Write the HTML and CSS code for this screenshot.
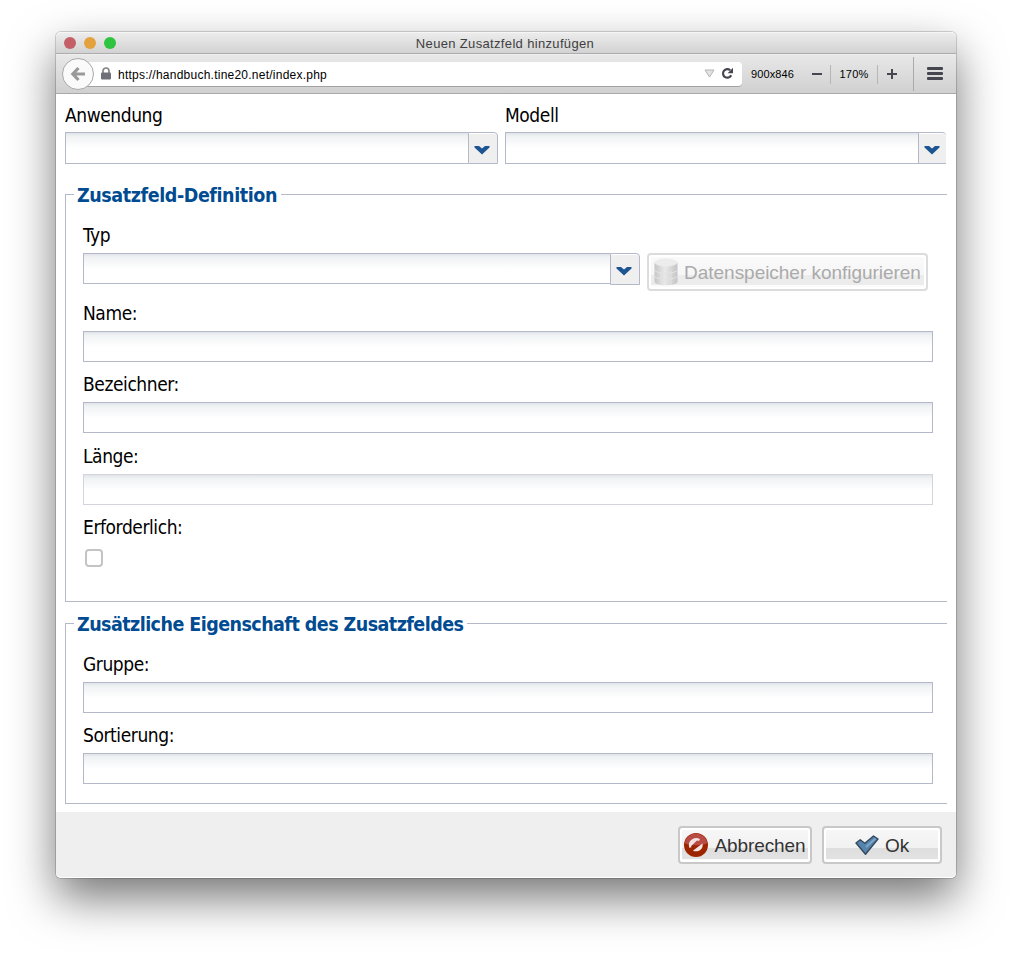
FILE: index.html
```html
<!DOCTYPE html>
<html lang="de">
<head>
<meta charset="utf-8">
<title>Neuen Zusatzfeld hinzufügen</title>
<link rel="stylesheet" href="styles.css">
</head>
<body>
<div class="window">
  <header class="titlebar">
    <div class="lights"><i class="light close"></i><i class="light minimize"></i><i class="light maximize"></i></div>
    <span class="title">Neuen Zusatzfeld hinzufügen</span>
  </header>
  <nav class="toolbar">
    <button class="back" aria-label="Zurück"><svg width="16" height="16" viewBox="0 0 16 16"><path d="M8.500 2 2.800 8l5.700 6M3 8h12" fill="none" stroke="#999" stroke-width="3.200"/></svg></button>
    <div class="url">
      <svg class="lock" width="10" height="13" viewBox="0 0 10 13"><path d="M2 6V4a3 3 0 0 1 6 0v2" fill="none" stroke="#858585" stroke-width="1.700"/><rect y="5.600" width="10" height="6.900" rx="1" fill="#70707a"/></svg>
      <span class="address">https://handbuch.tine20.net/index.php</span>
      <svg class="history" width="11" height="9" viewBox="0 0 11 9"><path d="M1 1h9L5.500 8z" fill="#e3e3e3" stroke="#b3b3b3"/></svg>
      <svg class="reload" width="13" height="13" viewBox="0 0 13 13"><path d="M10.200 8.200A4.300 4.300 0 1 1 9.200 3.200" fill="none" stroke="#464650" stroke-width="2.200"/><path d="M12 .8v5.400H6.600z" fill="#464650"/></svg>
    </div>
    <span class="size">900x846</span>
    <span class="minus"></span>
    <span class="zoom">170%</span>
    <span class="plus"></span>
    <span class="menu"><i></i><i></i><i></i></span>
  </nav>
  <main class="content">
    <div class="top-row">
      <div class="col-app">
        <label class="label">Anwendung</label>
        <div class="combo tall"><div class="input"></div><div class="trigger"><svg width="16" height="10" viewBox="0 0 16 10"><path d="M.5 1H5l3 2.500L11 1h4.500v1.500L8 9.500.5 2.500z" fill="#1d5592"/></svg></div></div>
      </div>
      <div class="col-model">
        <label class="label">Modell</label>
        <div class="combo tall cut"><div class="input"></div><div class="trigger"><svg width="16" height="10" viewBox="0 0 16 10"><path d="M.5 1H5l3 2.500L11 1h4.500v1.500L8 9.500.5 2.500z" fill="#1d5592"/></svg></div></div>
      </div>
    </div>
    <fieldset class="group definition">
      <legend>Zusatzfeld-Definition</legend>
      <div class="field">
        <label class="label">Typ</label>
        <div class="type-row">
          <div class="combo type"><div class="input"></div><div class="trigger"><svg width="16" height="10" viewBox="0 0 16 10"><path d="M.5 1H5l3 2.500L11 1h4.500v1.500L8 9.500.5 2.500z" fill="#1d5592"/></svg></div></div>
          <button class="btn store" disabled>
            <svg width="24" height="28" viewBox="0 0 24 28"><defs><linearGradient id="db"><stop offset="0" stop-color="#c6c6c6"/><stop offset=".45" stop-color="#e9e9e9"/><stop offset="1" stop-color="#c4c4c4"/></linearGradient></defs><path d="M.5 4.500v19c0 5 23 5 23 0v-19z" fill="url(#db)"/><ellipse cx="12" cy="4.500" rx="11.500" ry="4" fill="#ececec"/><path d="M.5 12c0 4 23 4 23 0M.5 18c0 4 23 4 23 0" fill="none" stroke="#e4e4e4"/><path d="M7 13v14M12 13v14M17 13v14" stroke="#e2e2e2"/></svg>
            <span>Datenspeicher konfigurieren</span>
          </button>
        </div>
      </div>
      <div class="field"><label class="label">Name:</label><div class="input"></div></div>
      <div class="field"><label class="label">Bezeichner:</label><div class="input"></div></div>
      <div class="field length"><label class="label">Länge:</label><div class="input disabled"></div></div>
      <div class="field"><label class="label">Erforderlich:</label><div class="check"></div></div>
    </fieldset>
    <fieldset class="group extra">
      <legend class="long">Zusätzliche Eigenschaft des Zusatzfeldes</legend>
      <div class="field"><label class="label">Gruppe:</label><div class="input"></div></div>
      <div class="field"><label class="label">Sortierung:</label><div class="input"></div></div>
    </fieldset>
  </main>
  <footer class="footer">
    <button class="btn cancel">
      <svg width="24" height="26" viewBox="0 0 24 26"><circle cx="12" cy="13" r="12" fill="#9c2500"/><path d="M.5 11a11.700 11.700 0 0 1 23 0c-5 3-18 3-23 0z" fill="#c25a5c" opacity=".75"/><path d="M6.300 15.500C4.500 9.500 10 5.500 15.500 8" fill="none" stroke="#f3e4e3" stroke-width="2.200"/><path d="M5.600 15.500 14.500 7l-5 1.500-3.500 3z" fill="#f3e4e3"/><path d="M18.400 11.500c1.500 5.500-4 9.500-9.500 7.200z" fill="#f3e4e3"/></svg>
      <span>Abbrechen</span>
    </button>
    <button class="btn ok">
      <svg width="24" height="20" viewBox="0 0 24 20"><path d="m1 8 4.200-3.200 4.600 3.500L18.500 1 23 4 10.500 19.200z" fill="#5683ac" stroke="#34485f" stroke-width="1.400" stroke-linejoin="round"/><path d="m11 12 9.500-8.500" stroke="#7fa6c8" stroke-width="1.800"/></svg>
      <span>Ok</span>
    </button>
  </footer>
</div>
</body>
</html>
```

FILE: styles.css
```css
* { box-sizing: border-box; }
html, body { height: 100%; }
body { margin: 0; padding: 32px 56px 0; background: #fff; overflow: hidden; font-family: "Liberation Sans", Arial, sans-serif; }
button { font: inherit; padding: 0; margin: 0; }
svg { display: block; flex: none; }

.window { width: 900px; height: 846px; border-radius: 5px; background: #fff; display: flex; flex-direction: column; box-shadow: 0 0 0 1px rgba(0,0,0,.16), 0 20px 46px rgba(0,0,0,.54); }

.titlebar { height: 22px; display: grid; grid-template-columns: 100px 1fr 102px; align-items: center; border-radius: 5px 5px 0 0; background: linear-gradient(#ececec, #d2d2d2); border-top: 1px solid #f6f6f6; border-bottom: 1px solid #adadad; }
.lights { display: flex; gap: 8px; padding-left: 8px; }
.light { width: 12px; height: 12px; border-radius: 50%; }
.close { background: #c45f67; }
.minimize { background: #e4a23f; }
.maximize { background: #2ec43f; }
.title { text-align: center; font-size: 13px; line-height: 16px; color: #404040; letter-spacing: .34px; white-space: nowrap; padding-top: 1px; }

.toolbar { height: 40px; display: flex; align-items: center; background: linear-gradient(#e8e8e8, #d0d0d0); border-top: 1px solid #eee; border-bottom: 1px solid #a9a9a9; font-size: 11px; color: #000; }
.back { width: 32px; height: 32px; margin-left: 6px; border-radius: 50%; border: 1px solid #a9a9a9; background: #fafafa; display: flex; align-items: center; justify-content: center; padding-right: 1px; z-index: 1; }
.url { width: 657px; height: 25px; margin-left: -9px; padding: 0 8px 0 21px; display: flex; align-items: center; background: #fff; border-bottom: 1px solid #a2a2a2; border-radius: 0 4px 4px 0; }
.lock { margin-left: -5px; }
.address { margin-left: 7px; padding-top: 2px; font-size: 12px; letter-spacing: .24px; flex: 1; }
.history { margin-right: -1px; }
.reload { margin-left: 7px; }
.size { width: 45px; margin-left: 9px; white-space: nowrap; letter-spacing: .1px; }
.minus { width: 10px; height: 2px; margin-left: 16px; background: #464650; }
.zoom { height: 19px; line-height: 19px; width: 48px; margin-left: 8px; text-align: center; letter-spacing: .2px; border-left: 1px solid #b5b5b5; border-right: 1px solid #b5b5b5; }
.plus { width: 10px; height: 10px; margin-left: 9px; background: linear-gradient(#464650, #464650) center / 10px 2px no-repeat, linear-gradient(#464650, #464650) center / 2px 10px no-repeat; }
.menu { height: 34px; margin-left: 16px; padding: 0 0 1px 13px; border-left: 1px solid #aaa; display: flex; flex-direction: column; justify-content: center; gap: 2px; }
.menu i { width: 16px; height: 3px; border-radius: 1px; background: #464650; }

.content { height: 718px; padding: 10px 9px 0; font-family: "DejaVu Sans Condensed", "DejaVu Sans", sans-serif; font-stretch: condensed; font-size: 19px; color: #000; }
.label { display: block; height: 22px; line-height: 22px; margin-bottom: 7px; letter-spacing: -.42px; white-space: nowrap; }
.top-row { display: grid; grid-template-columns: 433px 441px; gap: 7px; }
.top-row .label { margin-bottom: 6px; }
.input { height: 31px; border: 1px solid #b5b8c8; background: linear-gradient(#dfe3e9, #eff2f3 3px, #fff 15px); }
.disabled { border-color: #d3d4dd; }
.combo { display: flex; }
.combo .input { flex: 1; border-right: 0; }
.trigger { width: 30px; height: 32px; padding: 3px 2px 0 0; border: 1px solid #b5b8c8; border-top-right-radius: 4px; background: #efefef; box-shadow: inset 0 1px #fff; display: flex; align-items: center; justify-content: center; }
.tall .input { height: 32px; }
.cut .trigger { width: 28px; padding-right: 1px; border-right: 0; }

.group { min-width: 0; width: 882px; margin: 0; padding: 18px 14px 0 17px; border: 1px solid #b5b8c8; border-right: 0; }
.definition { height: 419px; margin-top: 19px; }
.extra { height: 192px; margin-top: 10px; }
.group legend { height: 23px; line-height: 25px; margin-left: -9px; padding: 0 4px 0 3px; font-weight: bold; font-size: 19.500px; color: #004b91; white-space: nowrap; letter-spacing: -.430px; }
.group .long { letter-spacing: -.56px; }
.field { margin-bottom: 11px; }
.field.length { margin-top: 12px; }
.type-row { display: flex; gap: 7px; height: 38px; }
.type { width: 557px; }
.check { width: 18px; height: 18px; margin: 11px 0 0 2px; border: 2px solid #c4c4c4; border-radius: 4px; background: #fff; }

.btn { display: flex; align-items: center; justify-content: center; height: 38px; border: 2px solid #c8c8c8; border-radius: 4px; background: linear-gradient(#f7f7f7, #f1f1f1 60%, #dedede 60%, #e2e2e2 90%, #fafafa 90%); box-shadow: inset 0 0 0 2px #fff; font-family: "Liberation Sans", Arial, sans-serif; font-stretch: normal; font-size: 19px; color: #333; white-space: nowrap; }
.btn span { padding-top: 1px; letter-spacing: -.1px; }
.store { width: 281px; gap: 6px; border-color: #dcdcdc; background: linear-gradient(#fafafa, #f6f6f6 58%, #ececec 58%, #ececec 88%, #fbfbfb 88%); color: #aaa; }
.store span { padding-top: 2px; letter-spacing: -.03px; }

.footer { height: 66px; padding: 14px 14px 0 0; display: flex; justify-content: flex-end; gap: 10px; background: #efefef; border-bottom: 1px solid #fff; border-radius: 0 0 5px 5px; }
.cancel { width: 134px; gap: 6px; }
.ok { width: 120px; gap: 6px; }
```
